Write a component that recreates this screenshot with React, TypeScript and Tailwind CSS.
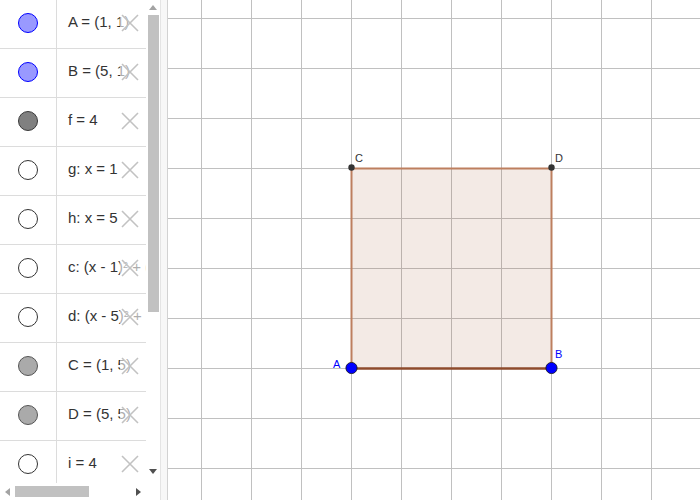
import React from 'react'

type Item = {
  label: React.ReactNode
  fill: string
  stroke: string
}

const items: Item[] = [
  { label: 'A = (1, 1)', fill: '#9999ff', stroke: '#0000ff' },
  { label: 'B = (5, 1)', fill: '#9999ff', stroke: '#0000ff' },
  { label: 'f = 4', fill: '#808080', stroke: '#3a3a3a' },
  { label: 'g: x = 1', fill: '#ffffff', stroke: '#333333' },
  { label: 'h: x = 5', fill: '#ffffff', stroke: '#333333' },
  {
    label: (
      <>
        c: (x - 1)<sup className="text-[9px]">2</sup> + (y - 1)<sup className="text-[9px]">2</sup> = 16
      </>
    ),
    fill: '#ffffff',
    stroke: '#333333',
  },
  {
    label: (
      <>
        d: (x - 5)<sup className="text-[9px]">2</sup> + (y - 1)<sup className="text-[9px]">2</sup> = 16
      </>
    ),
    fill: '#ffffff',
    stroke: '#333333',
  },
  { label: 'C = (1, 5)', fill: '#aaaaaa', stroke: '#555555' },
  { label: 'D = (5, 5)', fill: '#aaaaaa', stroke: '#555555' },
  { label: 'i = 4', fill: '#ffffff', stroke: '#333333' },
]

const CloseIcon = () => (
  <svg width="18" height="18" viewBox="0 0 18 18">
    <path d="M1 1 L17 17 M17 1 L1 17" stroke="#c2c2c2" strokeWidth="1.6" fill="none" />
  </svg>
)

const Row = ({ item }: { item: Item }) => (
  <div className="flex h-[49px] border-b border-[#dcdcdc]">
    <div className="flex w-[57px] shrink-0 items-center justify-center border-r border-[#dcdcdc] pb-[3px]">
      <span
        className="block h-[20px] w-[20px] rounded-full border"
        style={{ backgroundColor: item.fill, borderColor: item.stroke }}
      />
    </div>
    <div className="relative flex min-w-0 flex-1 items-center overflow-hidden pb-[3px] pl-[11px]">
      <span className="whitespace-nowrap text-[15px] text-[#333333]">{item.label}</span>
      <div className="absolute right-0 top-0 flex h-full w-[26px] items-center justify-start bg-white/60 pb-[3px] pl-[1px]">
        <CloseIcon />
      </div>
    </div>
  </div>
)

const Arrow = ({ dir }: { dir: 'up' | 'down' | 'left' | 'right' }) => {
  const d = {
    up: 'M0 5 L4 0 L8 5 Z',
    down: 'M0 0 L8 0 L4 5 Z',
    left: 'M5 0 L5 8 L0 4 Z',
    right: 'M0 0 L5 4 L0 8 Z',
  }[dir]
  const vertical = dir === 'up' || dir === 'down'
  return (
    <svg width={vertical ? 8 : 5} height={vertical ? 5 : 8} viewBox={vertical ? '0 0 8 5' : '0 0 5 8'}>
      <path d={d} fill={dir === 'up' || dir === 'left' ? '#a3a3a3' : '#505050'} />
    </svg>
  )
}

const Canvas = () => {
  const vLines = Array.from({ length: 11 }, (_, i) => 33.5 + i * 50)
  const hLines = Array.from({ length: 10 }, (_, i) => 18.5 + i * 50)
  return (
    <div className="relative flex-1 overflow-hidden bg-white">
      <svg width="532" height="500" className="block" style={{ fontFamily: '"Liberation Sans", Arial, sans-serif' }}>
        {vLines.map((x) => (
          <line key={'v' + x} x1={x} y1={0} x2={x} y2={500} stroke="#c0c0c0" strokeWidth="1" />
        ))}
        {hLines.map((y) => (
          <line key={'h' + y} x1={0} y1={y} x2={532} y2={y} stroke="#c0c0c0" strokeWidth="1" />
        ))}
        <rect x={183.5} y={168.5} width={200} height={200} fill="#a0522d" fillOpacity="0.12" />
        <line x1={183.5} y1={168.5} x2={383.5} y2={168.5} stroke="#bd7f5f" strokeWidth="2" />
        <line x1={183.5} y1={168.5} x2={183.5} y2={368.5} stroke="#bd7f5f" strokeWidth="2" />
        <line x1={383.5} y1={168.5} x2={383.5} y2={368.5} stroke="#bd7f5f" strokeWidth="2" />
        <line x1={183.5} y1={368.5} x2={383.5} y2={368.5} stroke="#8e4b2c" strokeWidth="2.5" />
        <circle cx={183.5} cy={167.5} r={3.2} fill="#333333" />
        <circle cx={383.5} cy={167.5} r={3.2} fill="#333333" />
        <circle cx={183.5} cy={368} r={5.6} fill="#0000ff" stroke="#111111" strokeWidth="0.8" />
        <circle cx={383.5} cy={368} r={5.6} fill="#0000ff" stroke="#111111" strokeWidth="0.8" />
        <text x={187} y={162} fontSize="11" fill="#333333">C</text>
        <text x={387} y={162} fontSize="11" fill="#333333">D</text>
        <text x={165} y={368} fontSize="11" fill="#0000ff">A</text>
        <text x={387} y={358} fontSize="11" fill="#0000ff">B</text>
      </svg>
    </div>
  )
}

const App = () => (
  <div
    className="flex h-[500px] w-[700px] overflow-hidden bg-white"
    style={{ fontFamily: '"Liberation Sans", Arial, sans-serif' }}
  >
    <div className="flex w-[160px] shrink-0 flex-col">
      <div className="flex min-h-0 flex-1">
        <div className="w-[146px] overflow-hidden">
          {items.map((item, i) => (
            <Row key={i} item={item} />
          ))}
        </div>
        <div className="flex w-[14px] flex-col items-center bg-white">
          <div className="flex h-[13px] items-center justify-center pt-[2px]">
            <Arrow dir="up" />
          </div>
          <div className="mt-[2px] h-[297px] w-[11px] bg-[#c1c1c1]" />
          <div className="flex-1" />
          <div className="flex h-[16px] items-start justify-center pt-[2px]">
            <Arrow dir="down" />
          </div>
        </div>
      </div>
      <div className="flex h-[17px] items-center">
        <div className="flex h-full w-[146px] items-center bg-white">
          <div className="flex w-[15px] justify-center">
            <Arrow dir="left" />
          </div>
          <div className="h-[11px] w-[74px] bg-[#c1c1c1]" />
          <div className="flex-1" />
          <div className="flex w-[15px] justify-center">
            <Arrow dir="right" />
          </div>
        </div>
        <div className="h-full flex-1 bg-white" />
      </div>
    </div>
    <div className="w-[8px] shrink-0 border-l border-r border-l-[#e4e4e4] border-r-[#d2d2d2] bg-[#f7f7f7]" />
    <Canvas />
  </div>
)

export default App
